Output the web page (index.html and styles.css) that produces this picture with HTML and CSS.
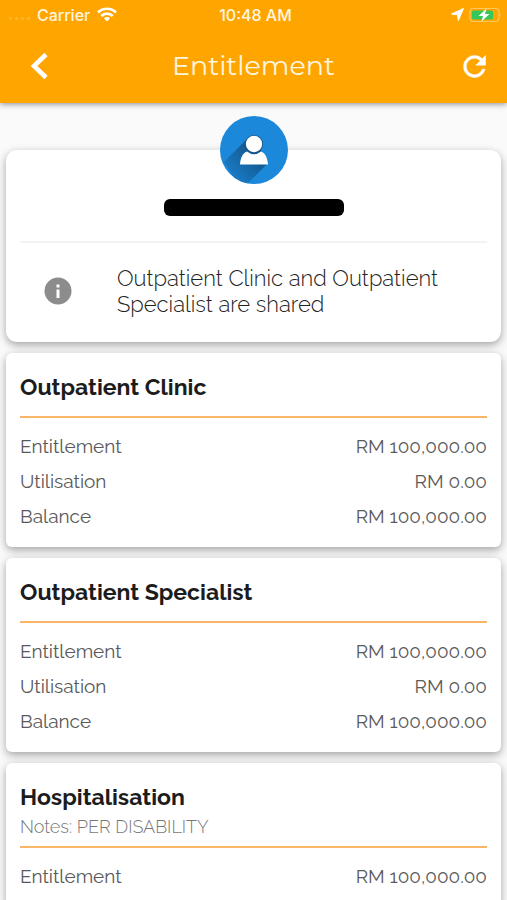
FILE: index.html
```html
<!DOCTYPE html>
<html lang="en">
<head>
<meta charset="utf-8">
<meta name="viewport" content="width=device-width, initial-scale=1">
<title>Entitlement</title>
<link rel="stylesheet" href="styles.css">
</head>
<body>
<header class="appbar">
  <div class="status">
    <div class="status-left">
      <span class="signal"><i></i><i></i><i></i><i></i></span>
      <span>Carrier</span>
      <svg class="wifi" viewBox="0 0 20 15" aria-hidden="true"><g fill="none" stroke="#fff" stroke-width="2.6"><path d="M1 5.5C6 .4 14 .4 19 5.500"/><path d="M4.300 9C7.500 5.800 12.500 5.800 15.700 9"/></g><path fill="#fff" d="M6.800 11.300C8.600 9.600 11.400 9.600 13.200 11.300L10 14.500Z"/></svg>
    </div>
    <span class="clock">10:48 AM</span>
    <div class="status-right">
      <svg class="location" viewBox="0 0 13 13" aria-hidden="true"><path fill="#fff" stroke="#fff" stroke-linejoin="round" d="M12.500.5 7.300 12.500 6.500 6.800.5 6Z"/></svg>
      <svg class="battery" viewBox="0 0 33 16" aria-hidden="true"><rect x="1" y="1.500" width="29" height="13" rx="3.500" fill="none" stroke="#ffc860" stroke-width="1.200"/><rect x="3" y="3.500" width="21" height="9" rx="1.500" fill="#35c759"/><path fill="#ffc860" d="M31 6q1.600 2 0 4Z"/><path fill="#fff" d="M17.500 1.500 9.500 9H14L12.500 14.500 20.500 7H16Z"/></svg>
    </div>
  </div>
  <div class="toolbar">
    <button class="icon-button back" type="button" aria-label="Back"><svg width="28" height="28" viewBox="0 0 28 28"><path d="M21 2.500 9 14 21 25.500" fill="none" stroke="#fff" stroke-width="4.600"/></svg></button>
    <h1>Entitlement</h1>
    <button class="icon-button refresh" type="button" aria-label="Refresh"><svg width="33" height="33" viewBox="0 0 24 24"><path fill="#fff" stroke="#fff" stroke-width=".4" d="M17.650 6.350A7.960 7.960 0 0 0 12 4a8 8 0 1 0 7.730 10h-2.080A6 6 0 1 1 12 6c1.660 0 3.140.690 4.220 1.780L13 11h7V4l-2.350 2.350z"/></svg></button>
  </div>
</header>
<main>
  <section class="card profile">
    <svg class="avatar" viewBox="0 0 68 68" role="img" aria-label="Member">
      <defs>
        <clipPath id="disc"><circle cx="34" cy="34" r="34"/></clipPath>
        <linearGradient id="shade" x1="1" y1="0" x2="0" y2="1"><stop offset=".3" stop-color="#14588f"/><stop offset="1" stop-color="#1b87d9"/></linearGradient>
      </defs>
      <circle cx="34" cy="34" r="34" fill="#1b88da"/>
      <path clip-path="url(#disc)" fill="url(#shade)" d="M28 22 4 46 18 68 29 66 47 48 40 32Z"/>
      <path fill="#fff" d="M20 48.500C20.500 41 23.500 36.500 27 35.500Q34 41 41 35.500C44.500 36.500 47.500 41 48 48.500Z"/>
      <circle cx="34" cy="28" r="9" fill="#174f80"/>
      <circle cx="34" cy="28" r="8.200" fill="#fff"/>
    </svg>
    <div class="redacted"></div>
    <div class="notice">
      <svg width="28" height="28" viewBox="0 0 28 28" aria-hidden="true"><circle cx="14" cy="14" r="13.500" fill="#8c8c8c"/><path fill="#fff" d="M12.500 7.500h3v3h-3zM12.500 12.500h3v8.500h-3z"/></svg>
      <p>Outpatient Clinic and Outpatient Specialist are shared</p>
    </div>
  </section>
  <section class="card">
    <h2>Outpatient Clinic</h2>
    <dl>
      <div><dt>Entitlement</dt><dd>RM 100,000.00</dd></div>
      <div><dt>Utilisation</dt><dd>RM 0.00</dd></div>
      <div><dt>Balance</dt><dd>RM 100,000.00</dd></div>
    </dl>
  </section>
  <section class="card">
    <h2>Outpatient Specialist</h2>
    <dl>
      <div><dt>Entitlement</dt><dd>RM 100,000.00</dd></div>
      <div><dt>Utilisation</dt><dd>RM 0.00</dd></div>
      <div><dt>Balance</dt><dd>RM 100,000.00</dd></div>
    </dl>
  </section>
  <section class="card noted">
    <h2>Hospitalisation</h2>
    <p class="notes">Notes: PER DISABILITY</p>
    <dl>
      <div><dt>Entitlement</dt><dd>RM 100,000.00</dd></div>
    </dl>
  </section>
</main>
</body>
</html>
```
FILE: styles.css
```css
* { box-sizing: border-box; }
html { scrollbar-width: none; }
body {
  margin: 0;
  background: #fafafa;
  color: #5a5a5a;
  font-family: Raleway, Lato, sans-serif;
  font-size: 19px;
  font-weight: 400;
}
h1, h2, p, dl, dd { margin: 0; }

.appbar {
  position: relative;
  background: #ffa500;
  color: #fff;
  box-shadow: 0 1px 6px rgba(0, 0, 0, .45);
}
.status {
  display: grid;
  grid-template-columns: 1fr auto 1fr;
  align-items: center;
  height: 29px;
  padding: 0 5px 0 9px;
  font: 500 16px/20px Inter, sans-serif;
  color: #fff6e0;
}
.status-left, .status-right { display: flex; align-items: center; gap: 7px; }
.status-right { justify-content: flex-end; gap: 5px; }
.signal { display: flex; gap: 3px; padding-top: 8px; }
.signal i { width: 3px; height: 3px; border-radius: 50%; background: #ffb733; }
.wifi { width: 20px; height: 15px; }
.location { width: 13px; height: 13px; }
.battery { width: 33px; height: 16px; }
.toolbar {
  display: grid;
  grid-template-columns: 1fr auto 1fr;
  align-items: center;
  height: 74px;
  padding: 0 8px;
}
.toolbar h1 {
  font: 400 27px/36px Montserrat, Lato, sans-serif;
  color: #fff6e0;
}
.icon-button {
  display: grid;
  place-items: center;
  height: 50px;
  padding: 0;
  border: 0;
  background: none;
}
.back { width: 62px; }
.refresh { width: 50px; justify-self: end; }

main {
  display: flex;
  flex-direction: column;
  gap: 11px;
  padding: 47px 6px 0;
}
.card {
  padding: 20px 14px 13px;
  border-radius: 6px;
  background: #fff;
  box-shadow: 0 3px 8px rgba(0, 0, 0, .35);
}
.profile {
  display: flex;
  flex-direction: column;
  padding-top: 0;
  padding-bottom: 0;
  border-radius: 11px;
}
.avatar { width: 68px; height: 68px; margin: -34px auto 15px; }
.redacted {
  width: 180px;
  height: 17px;
  margin: 0 auto 25px;
  border-radius: 6px;
  background: #000;
}
.notice {
  display: flex;
  align-items: center;
  gap: 45px;
  height: 101px;
  padding: 0 24px 4px;
  border-top: 2px solid #f3f3f3;
  font-size: 22px;
  font-weight: 300;
  line-height: 26px;
  color: #222;
}
.notice svg { flex: none; }

h2 {
  padding-bottom: 15px;
  font-size: 23px;
  font-weight: 700;
  line-height: 28px;
  color: #1c1c1c;
}
.noted h2 { padding-bottom: 0; }
.notes { padding-bottom: 4px; font-size: 18px; font-weight: 300; line-height: 31px; color: #777; }
dl { padding-top: 11px; border-top: 2px solid #f9b568; }
dl div { display: flex; justify-content: space-between; line-height: 35px; }
```
